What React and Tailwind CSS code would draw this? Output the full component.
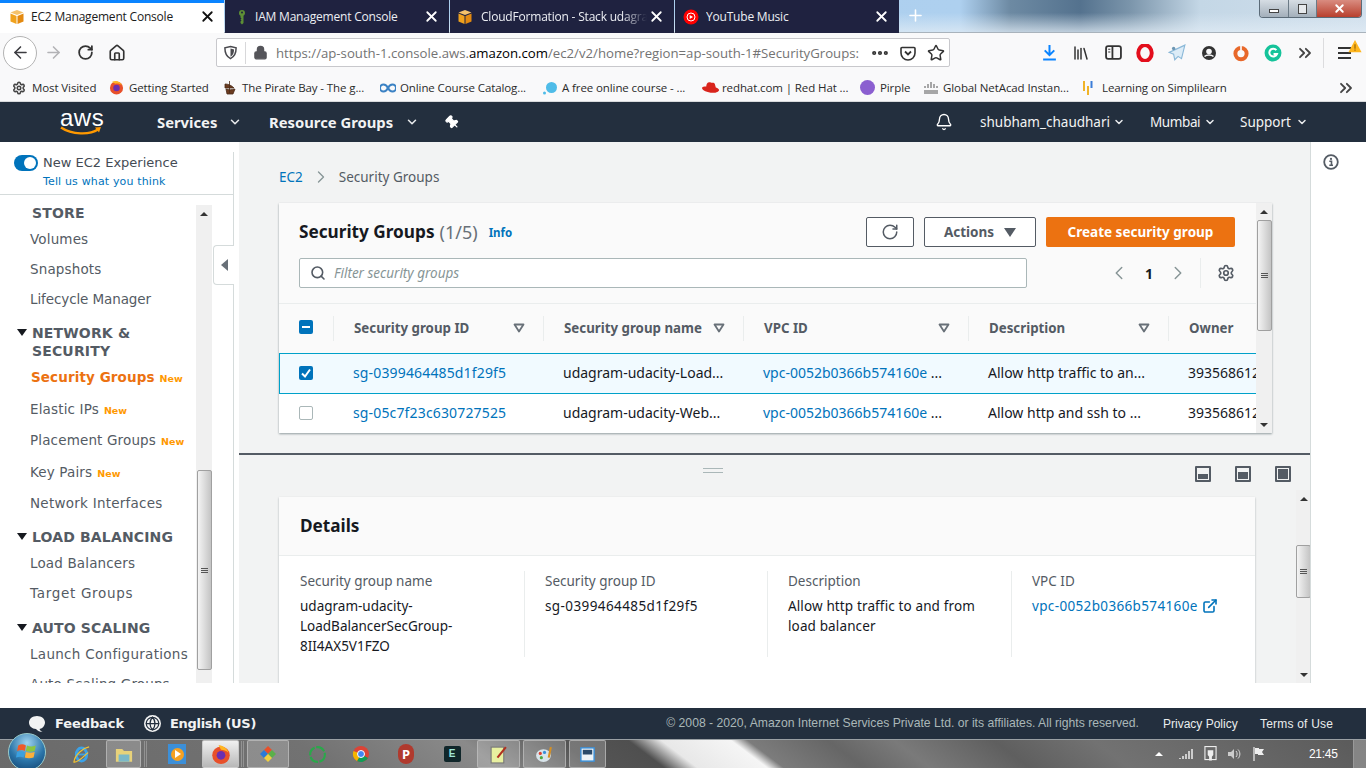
import React from "react";
import { ChevronDown, Bell, Pin, RotateCw, Search, Settings, ChevronLeft, ChevronRight, Library, Star, Home, ArrowLeft, ArrowRight, Lock, MoreHorizontal, X, Plus, ChevronsRight, Globe, ExternalLink } from "lucide-react";

const ui = "font-['Noto_Sans',sans-serif]";
const tabFont = "font-['Open_Sans','Noto_Sans',sans-serif]";

function Cube({ className = "" }) {
  return (
    <svg viewBox="0 0 16 16" className={`w-4 h-4 shrink-0 ${className}`}>
      <path d="M8 1 14.500 3.500 8 6 1.500 3.500Z" fill="#f5c26b" />
      <path d="M1.500 4.500 7.500 7V15L1.500 12.500Z" fill="#f0a21e" />
      <path d="M14.500 4.500 8.500 7V15L14.500 12.500Z" fill="#e48a10" />
    </svg>
  );
}
function KeyIcon() {
  return (
    <svg viewBox="0 0 16 16" className="w-4 h-4 shrink-0">
      <path d="M8 1c2 0 3 1.200 3 3 0 1.400-.8 2.300-1.500 2.700V14L8 15.500 6.500 14v-1.500L7.500 11.500 6.500 10.500 7.500 9.500 6.500 8.500V6.700C5.500 6.200 5 5.300 5 4c0-1.800 1-3 3-3Z" fill="#5d8f35" />
      <circle cx="8" cy="3.500" r="1" fill="#1f2340" />
    </svg>
  );
}
function YtIcon() {
  return (
    <svg viewBox="0 0 16 16" className="w-4 h-4 shrink-0">
      <circle cx="8" cy="8" r="7.500" fill="#f00" />
      <circle cx="8" cy="8" r="4" fill="none" stroke="#fff" strokeWidth="1" />
      <path d="M6.700 6v4L10 8Z" fill="#fff" />
    </svg>
  );
}

function Tab({ icon, label, xClass, textClass = "left-[31px]", fade }) {
  return (
    <div className="w-[224px] h-[33px] mr-px bg-[#1f2240] flex items-center relative shrink-0">
      <div className={`absolute top-[9px] ${xClass}`}>{icon}</div>
      <span className={`absolute top-[8px] ${textClass} text-[12px] leading-[18px] tracking-[-0.2px] text-[#eceef3] whitespace-nowrap overflow-hidden ${fade ? "w-[166px] [mask-image:linear-gradient(to_right,#000_85%,transparent)]" : ""} ${tabFont}`}>{label}</span>
      <X className="absolute left-[198px] top-[8px] w-[17px] h-[17px] text-white" strokeWidth={2.5} />
    </div>
  );
}

function TabStrip() {
  return (
    <div className="h-[33px] flex shrink-0 relative border-b border-[#a9b3bc] bg-[linear-gradient(to_bottom,rgba(255,255,255,0)_40%,rgba(225,236,245,0.75)_100%),linear-gradient(to_right,#a8cdee_0px,#aed0ef_960px,#6d8aa3_1010px,#54728e_1080px,#7b95ab_1130px,#c4d7e6_1200px,#d0dfec_1366px)]">
      <div className="w-[224px] h-[33px] mr-px bg-white border-t-[3px] border-[#0a84ff] relative shrink-0">
        <Cube className="absolute left-[9px] top-[6px]" />
        <span className={`absolute top-[5px] left-[31px] text-[12px] leading-[18px] tracking-[-0.2px] text-[#1b1b1b] whitespace-nowrap ${tabFont}`}>EC2 Management Console</span>
        <X className="absolute left-[199px] top-[5px] w-[17px] h-[17px] text-[#111]" strokeWidth={2.5} />
      </div>
      <Tab icon={<KeyIcon />} label="IAM Management Console" xClass="left-[9px]" textClass="left-[30px]" />
      <Tab icon={<Cube />} label="CloudFormation - Stack udagram" xClass="left-[7px]" fade />
      <Tab icon={<YtIcon />} label="YouTube Music" xClass="left-[8px]" />
      <Plus className="w-[19px] h-[19px] text-white ml-[6px] mt-[6px]" strokeWidth={2} />
      <div className="absolute right-[4px] top-0 w-[103px] h-[18px] flex rounded-b-[4px] border border-t-0 border-[#5b6b78] overflow-hidden">
        <div className="w-[29px] bg-[linear-gradient(to_bottom,#d6dde4,#a3afba)] flex items-center justify-center border-r border-[#6b7a86]">
          <div className="w-[10px] h-[4px] border border-[#444] bg-white mt-[4px]" />
        </div>
        <div className="w-[28px] bg-[linear-gradient(to_bottom,#d6dde4,#a3afba)] flex items-center justify-center border-r border-[#6b7a86]">
          <div className="w-[9px] h-[10px] border border-[#444] bg-[#e6e9ec]" />
        </div>
        <div className="flex-1 bg-[linear-gradient(to_bottom,#d98c80,#b83f2d)] flex items-center justify-center">
          <X className="w-[13px] h-[13px] text-white" strokeWidth={3.5} />
        </div>
      </div>
    </div>
  );
}

function TB({ children, className = "" }) {
  return <div className={`w-[32px] h-[32px] flex items-center justify-center shrink-0 ${className}`}>{children}</div>;
}

function Toolbar() {
  return (
    <div className="h-[39px] bg-[#f9f9fa] flex items-center shrink-0 relative">
      <div className="w-[34px] h-[34px] ml-[3px] rounded-full border border-[#b3b3b3] bg-white flex items-center justify-center shrink-0">
        <ArrowLeft className="w-[19px] h-[19px] text-[#3c3c40]" strokeWidth={2} />
      </div>
      <TB className="ml-0"><ArrowRight className="w-[19px] h-[19px] text-[#b3b3b6]" strokeWidth={2} /></TB>
      <TB><RotateCw className="w-[17px] h-[17px] text-[#333]" strokeWidth={2.5} /></TB>
      <TB><Home className="w-[18px] h-[18px] text-[#333]" strokeWidth={2.2} /></TB>
      <div className="ml-[83px] w-[734px] h-[29px] bg-white border border-[#c8c8cc] rounded-[2px] flex items-center relative shrink-0">
        <svg viewBox="0 0 16 16" className="w-[15px] h-[15px] ml-[6px] shrink-0 text-[#4a4a4f]"><path d="M8 1.500 14 3c0 6-1.500 9.500-6 11.500C3.500 12.500 2 9 2 3Z" fill="none" stroke="currentColor" strokeWidth="1.600" /><path d="M8 3.800 11.800 4.700C11.700 8.500 10.700 11 8 12.500Z" fill="currentColor" /></svg>
        <div className="w-px h-[22px] bg-[#d8d8da] ml-[7px]" />
        <Lock className="w-[15px] h-[15px] ml-[7px] text-[#55555a] shrink-0" fill="#55555a" strokeWidth={2} />
        <span className={`ml-[8px] text-[13.200px] leading-[18px] text-[#737373] whitespace-nowrap ${tabFont}`}>https://ap-south-1.console.aws.<span className="text-black">amazon.com</span>/ec2/v2/home?region=ap-south-1#SecurityGroups:</span>
        <MoreHorizontal className="absolute left-[653px] top-[4px] w-[20px] h-[20px] text-[#333]" strokeWidth={3} />
        <svg viewBox="0 0 16 16" className="absolute left-[683px] top-[6px] w-[16px] h-[16px] text-[#333]"><path d="M2 2.500h12a1 1 0 0 1 1 1V8A7 7 0 0 1 1 8V3.500a1 1 0 0 1 1-1Z" fill="none" stroke="currentColor" strokeWidth="1.600" /><path d="M5 6.500 8 9.500 11 6.500" fill="none" stroke="currentColor" strokeWidth="1.800" /></svg>
        <Star className="absolute left-[710px] top-[5px] w-[18px] h-[18px] text-[#333]" strokeWidth={2} />
      </div>
      <div className="ml-[83px] flex items-center">
        <TB><svg viewBox="0 0 16 16" className="w-[17px] h-[17px]"><path d="M8 1v9M3.500 6 8 10.500 12.500 6M2 14.500h12" fill="none" stroke="#0a84ff" strokeWidth="1.900" /></svg></TB>
        <TB><Library className="w-[18px] h-[18px] text-[#333]" strokeWidth={2} /></TB>
        <TB><svg viewBox="0 0 16 16" className="w-[17px] h-[17px] text-[#333]"><rect x="1" y="2" width="14" height="12" rx="2" fill="none" stroke="currentColor" strokeWidth="1.700" /><path d="M7 2v12" stroke="currentColor" strokeWidth="1.700" /><path d="M3 5h2M3 7.500h2" stroke="currentColor" /></svg></TB>
        <TB><svg viewBox="0 0 16 16" className="w-[18px] h-[18px]"><ellipse cx="8" cy="8" rx="6" ry="7" fill="none" stroke="#e30e1c" strokeWidth="3.500" /></svg></TB>
        <TB><svg viewBox="0 0 16 16" className="w-[18px] h-[18px]"><path d="M15 1 1 7.500 5 9l1 5 3-3 3 2Z" fill="#dcecf7" stroke="#8ab8d8" strokeWidth="1" /><circle cx="5" cy="4" r="1.500" fill="#6d96b3" /></svg></TB>
        <TB><svg viewBox="0 0 16 16" className="w-[16px] h-[16px]"><circle cx="8" cy="8" r="7" fill="#333" /><circle cx="8" cy="6.500" r="2.800" fill="#f9f9fa" /><path d="M3.500 11.500c2-2 7-2 9 0" stroke="#f9f9fa" fill="none" strokeWidth="1.500" /></svg></TB>
        <TB><svg viewBox="0 0 16 16" className="w-[18px] h-[18px]"><circle cx="8" cy="8.500" r="5" fill="none" stroke="#e8682a" strokeWidth="3.500" /><path d="M8 1v5" stroke="#f9f9fa" strokeWidth="1.500" /></svg></TB>
        <TB><svg viewBox="0 0 16 16" className="w-[18px] h-[18px]"><circle cx="8" cy="8" r="7.500" fill="#15c39a" /><path d="M11 5.500A3.500 3.500 0 1 0 11.500 9H8.500" fill="none" stroke="#fff" strokeWidth="1.800" /></svg></TB>
        <TB><ChevronsRight className="w-[20px] h-[20px] text-[#444]" strokeWidth={2.2} /></TB>
      </div>
      <div className="w-px h-[30px] bg-[#dcdcde] ml-[2px]" />
      <div className="ml-[14px] w-[13px] flex flex-col gap-[3px] relative">
        <div className="h-[2px] bg-[#333]" /><div className="h-[2px] bg-[#333]" /><div className="h-[2px] bg-[#333]" />
      </div>
      <svg viewBox="0 0 16 16" className="absolute left-[1348px] top-[6px] w-[14px] h-[14px]"><path d="M8 1 15.500 15H.5Z" fill="#ffb61e" /><path d="M8 6v5M8 12v1.500" stroke="#8a5a00" strokeWidth="1.200" /></svg>
    </div>
  );
}

const bookmarks = [
  { w: "w-[97px]", label: "Most Visited", icon: <Settings className="w-[14px] h-[14px] text-[#444]" strokeWidth={2.6} /> },
  { w: "w-[113px]", label: "Getting Started", icon: <svg viewBox="0 0 16 16" className="w-[15px] h-[15px]"><circle cx="8" cy="8.500" r="7" fill="#e8502a" /><circle cx="8" cy="8.500" r="3.500" fill="#6a2fb0" /><path d="M3 2c4-2 9-1 11 4-3-3-6-2-7-2Z" fill="#ffb521" /></svg> },
  { w: "w-[158px]", label: "The Pirate Bay - The g...", icon: <svg viewBox="0 0 16 16" className="w-[16px] h-[16px]"><path d="M7.500 1v12M3 4c3 0 6 1 9 4-3 0-6 0-9 0ZM4 9c3 1 6 1 9 0l-2 5H5Z" fill="#6b3b20" stroke="#4a2b18" strokeWidth=".8" /></svg> },
  { w: "w-[162px]", label: "Online Course Catalog...", icon: <svg viewBox="0 0 16 10" className="w-[16px] h-[10px]"><path d="M8 5C6.500 2 4.500 1.500 3.500 1.500A3.500 3.500 0 0 0 3.500 8.500C4.500 8.500 6.500 8 8 5c1.500-3 3.500-3.500 4.500-3.500a3.500 3.500 0 0 1 0 7C11.500 8.500 9.500 8 8 5Z" fill="none" stroke="#3b82c4" strokeWidth="2" /></svg> },
  { w: "w-[160px]", label: "A free online course - ...", icon: <svg viewBox="0 0 16 16" className="w-[16px] h-[16px]"><circle cx="9.500" cy="7.500" r="5.500" fill="#4fbce8" /><circle cx="2.500" cy="13" r="1.500" fill="#4fbce8" /></svg> },
  { w: "w-[158px]", label: "redhat.com | Red Hat ...", icon: <svg viewBox="0 0 16 12" className="w-[17px] h-[13px]"><path d="M4 5c0-2 1-4 3-4 1 0 1.500.5 2.500.5S11 1 12 2.500L13 6c2 .5 3 1.500 3 2.500S14 11 10 11C5 11 0 8.500 0 6.500 0 5 2 5 4 5Z" fill="#d9241c" /></svg> },
  { w: "w-[63px]", label: "Pirple", icon: <div className="w-[15px] h-[15px] rounded-full bg-[#8b5fd0]" /> },
  { w: "w-[159px]", label: "Global NetAcad Instan...", icon: <svg viewBox="0 0 16 12" className="w-[16px] h-[12px]"><path d="M2 4v2M5 2v4M8 0v6M11 2v4M14 4v2M1 9h14M1 11h14" stroke="#555" strokeWidth="1" /></svg> },
  { w: "w-[150px]", label: "Learning on Simplilearn", icon: <svg viewBox="0 0 12 16" className="w-[12px] h-[16px]"><path d="M2 1v10M6 6v9" stroke="#f0b429" strokeWidth="2" /><path d="M9.500 1v7" stroke="#3b7dd8" strokeWidth="2" /></svg> },
];

function Bookmarks() {
  return (
    <div className="h-[30px] bg-[#f9f9fa] border-b border-[#d8dadc] flex items-center pl-[12px] pt-[2px] shrink-0 relative">
      {bookmarks.map((b) => (
        <div key={b.label} className={`${b.w} flex items-center shrink-0`}>
          <div className="w-[18px] h-[16px] flex items-center shrink-0 mr-[2px]">{b.icon}</div>
          <span className={`text-[11.500px] leading-[16px] tracking-[-0.1px] text-[#2b2b2b] whitespace-nowrap ${tabFont}`}>{b.label}</span>
        </div>
      ))}
      <ChevronsRight className="absolute left-[1336px] top-[6px] w-[20px] h-[20px] text-[#444]" strokeWidth={2.2} />
    </div>
  );
}

function NavCaret() {
  return <ChevronDown className="w-[14px] h-[14px] text-[#e8eaec]" strokeWidth={2.6} />;
}

function AwsNav() {
  return (
    <div className="h-[40px] bg-[#232f3e] flex items-center shrink-0 text-white">
      <div className="w-[157px] flex justify-start pl-[60px] shrink-0">
        <div className="relative w-[42px] h-[30px]">
          <span className="absolute left-0 -top-[3px] text-[24px] leading-[28px] font-['Liberation_Sans',sans-serif] text-white tracking-[0.5px]">aws</span>
          <svg viewBox="0 0 42 10" className="absolute left-0 top-[19px] w-[42px] h-[10px]"><path d="M1 1.500C12 9 30 9 38 3.500" fill="none" stroke="#ff9900" strokeWidth="2.400" /><path d="M35 1.500 41 1 39 6.500Z" fill="#ff9900" /></svg>
        </div>
      </div>
      <span className={`text-[14.800px] font-bold leading-[20px] text-[#f2f3f3] w-[61px] whitespace-nowrap ${ui}`}>Services</span>
      <div className="ml-[10px] w-[41px]"><NavCaret /></div>
      <span className={`text-[14.800px] font-bold leading-[20px] text-[#f2f3f3] w-[125px] whitespace-nowrap ${ui}`}>Resource Groups</span>
      <div className="ml-[11px] w-[40px]"><NavCaret /></div>
      <Pin className="w-[15px] h-[15px] text-white -rotate-45" fill="#fff" strokeWidth={2} />
      <Bell className="w-[18px] h-[18px] text-white ml-[475px]" strokeWidth={1.8} />
      <span className={`ml-[27px] text-[13.500px] leading-[20px] text-[#f2f3f3] w-[130px] whitespace-nowrap ${ui}`}>shubham_chaudhari</span>
      <div className="w-[40px] pl-[3px]"><ChevronDown className="w-[12px] h-[12px] text-[#e8eaec]" strokeWidth={3} /></div>
      <span className={`text-[13.500px] leading-[20px] tracking-[-0.4px] text-[#f2f3f3] w-[48px] ${ui}`}>Mumbai</span>
      <div className="w-[42px] pl-[6px]"><ChevronDown className="w-[12px] h-[12px] text-[#e8eaec]" strokeWidth={3} /></div>
      <span className={`text-[13.500px] leading-[20px] text-[#f2f3f3] w-[55px] ${ui}`}>Support</span>
      <ChevronDown className="w-[12px] h-[12px] text-[#e8eaec] ml-[1px]" strokeWidth={3} />
    </div>
  );
}

function Scrollbar({ before, thumb, w = "w-[16px]", end = true, className = "" }) {
  return (
    <div className={`${w} shrink-0 bg-[#f0f0f0] flex flex-col items-center ${className}`}>
      <div className="h-[17px] w-full flex items-center justify-center shrink-0">
        <div className="w-0 h-0 border-x-[4px] border-x-transparent border-b-[4px] border-b-[#333]" />
      </div>
      <div className={`${before} shrink-0`} />
      <div className={`${thumb} w-[15px] shrink-0 rounded-[2px] border border-[#a0a0a0] bg-[linear-gradient(to_right,#f4f4f4,#dcdcdc_50%,#c4c4c4)] flex flex-col items-center justify-center gap-[1px]`}>
        <div className="w-[7px] h-px bg-[#555]" /><div className="w-[7px] h-px bg-[#555]" /><div className="w-[7px] h-px bg-[#555]" />
      </div>
      <div className="flex-1" />
      {end && (
        <div className="h-[17px] w-full flex items-center justify-center shrink-0">
          <div className="w-0 h-0 border-x-[4px] border-x-transparent border-t-[4px] border-t-[#333]" />
        </div>
      )}
    </div>
  );
}

const Caret = () => <div className="w-0 h-0 border-x-[5px] border-x-transparent border-t-[7px] border-t-[#16191f] absolute left-[17px] top-[5px]" />;

const side = "font-['DejaVu_Sans',sans-serif]";

function SItem({ m, t = "tracking-[0.15px]", children }) {
  return <div className={`${m} ${t} h-[20px] pl-[30px] text-[13.500px] leading-[20px] text-[#545b64] whitespace-nowrap ${side}`}>{children}</div>;
}
function SHead({ m, caret, children }) {
  return (
    <div className={`${m} relative pl-[32px] text-[14px] font-bold leading-[18px] tracking-[0.15px] text-[#545b64] ${side}`}>
      {caret && <Caret />}
      {children}
    </div>
  );
}
const New = () => <span className="ml-[5px] text-[9.500px] font-bold tracking-normal text-[#ff9900]">New</span>;

function Sidebar() {
  return (
    <div className="w-[239px] shrink-0 bg-white flex flex-col relative">
      <div className="absolute left-[233px] top-[10px] h-[43px] w-px bg-[#d5dbdb]" />
      <div className="h-[53px] pt-[13px] pl-[14px] mr-[5px] border-b border-[#d5dbdb] shrink-0">
        <div className="flex items-center h-[16px]">
          <div className="w-[24px] h-[16px] rounded-full bg-[#0073bb] flex items-center justify-end pr-[2px] shrink-0">
            <div className="w-[12px] h-[12px] rounded-full bg-white" />
          </div>
          <span className={`ml-[5px] text-[13px] leading-[16px] text-[#444b54] whitespace-nowrap ${side}`}>New EC2 Experience</span>
        </div>
        <div className={`mt-[3px] ml-[29px] text-[11px] leading-[15px] tracking-[0.15px] text-[#0073bb] ${side}`}>Tell us what you think</div>
      </div>
      <div className="flex flex-1 min-h-0 mr-[5px] border-r border-[#d5dbdb]">
        <div className="w-[196px] shrink-0 overflow-hidden pt-[9px]">
          <SHead m="" caret={false}>STORE</SHead>
          <SItem m="mt-[7px]">Volumes</SItem>
          <SItem m="mt-[10px]">Snapshots</SItem>
          <SItem m="mt-[10px]" t="tracking-[-0.1px]">Lifecycle Manager</SItem>
          <SHead m="mt-[15px]" caret>NETWORK &amp;<br />SECURITY</SHead>
          <div className={`mt-[7px] h-[20px] pl-[31px] text-[13.500px] leading-[20px] font-bold tracking-[0.1px] text-[#ec7211] whitespace-nowrap ${side}`}>Security Groups<New /></div>
          <SItem m="mt-[12px]">Elastic IPs<New /></SItem>
          <SItem m="mt-[11px]">Placement Groups<New /></SItem>
          <SItem m="mt-[12px]">Key Pairs<New /></SItem>
          <SItem m="mt-[11px]" t="tracking-[0.25px]">Network Interfaces</SItem>
          <SHead m="mt-[15px]" caret>LOAD BALANCING</SHead>
          <SItem m="mt-[7px]">Load Balancers</SItem>
          <SItem m="mt-[10px]" t="tracking-[0.7px]">Target Groups</SItem>
          <SHead m="mt-[16px]" caret>AUTO SCALING</SHead>
          <SItem m="mt-[7px]" t="tracking-[0.3px]">Launch Configurations</SItem>
          <SItem m="mt-[10px]">Auto Scaling Groups</SItem>
        </div>
        <Scrollbar className="mt-[10px]" before="h-[248px]" thumb="h-[200px]" end={false} />
      </div>
      <div className="absolute left-[213px] top-[103px] w-[21px] h-[40px] bg-white border border-r-0 border-[#d5dbdb] rounded-l-[4px] flex items-center justify-center">
        <div className="w-0 h-0 border-y-[6px] border-y-transparent border-r-[7px] border-r-[#687078]" />
      </div>
    </div>
  );
}

const Sort = () => (
  <svg viewBox="0 0 12 10" className="w-[12px] h-[10px] shrink-0"><path d="M1.500 1.500h9L6 8.500Z" fill="none" stroke="#687078" strokeWidth="1.800" strokeLinejoin="round" /></svg>
);

function HeadCell({ label, iconClass }) {
  return (
    <div className="relative h-full flex items-center pl-[21px] pb-[2px] overflow-hidden">
      <div className="absolute left-0 top-[12px] bottom-[12px] w-px bg-[#eaeded]" />
      <span className={`text-[13.300px] font-bold leading-[20px] text-[#545b64] whitespace-nowrap ${ui}`}>{label}</span>
      {iconClass && <div className={`absolute top-[19px] ${iconClass}`}><Sort /></div>}
    </div>
  );
}

const link = "text-[#0073bb]";
const cols = "grid grid-cols-[54px_210px_200px_225px_200px_88px]";

function Row({ selected, id, name, desc }) {
  const cell = `pl-[20px] text-[14px] leading-[20px] whitespace-nowrap overflow-hidden ${ui}`;
  return (
    <div className={`${cols} items-center ${selected ? "h-[41px] pb-[1px] bg-[#f1faff] border-y border-[#00a1c9] shadow-[inset_1px_0_0_#00a1c9]" : "h-[39px] pb-[2px] bg-white"}`}>
      <div className="pl-[20px]">
        {selected ? (
          <div className="w-[14px] h-[14px] rounded-[2px] bg-[#0073bb] flex items-center justify-center">
            <svg viewBox="0 0 14 14" className="w-[14px] h-[14px]"><path d="M3 7.500 6 10.500 11 3.500" fill="none" stroke="#fff" strokeWidth="2" /></svg>
          </div>
        ) : (
          <div className="w-[14px] h-[14px] rounded-[2px] border border-[#aab7b8] bg-white" />
        )}
      </div>
      <div className={`${cell} ${link} tracking-[0.15px]`}>{id}</div>
      <div className={`${cell} text-[#16191f]`}>{name}</div>
      <div className={`${cell} ${link}`}>vpc-0052b0366b574160e <span className="text-[#16191f]">...</span></div>
      <div className={`${cell} text-[#16191f]`}>{desc}</div>
      <div className={`${cell} text-[#16191f]`}>393568612345</div>
    </div>
  );
}

function TableCard() {
  return (
    <div className="w-[993px] h-[230px] flex bg-white shadow-[0_1px_2px_rgba(0,28,36,0.4)] shrink-0">
      <div className="w-[977px] shrink-0 flex flex-col">
        <div className="h-[101px] bg-[#fafafa] border-b border-[#eaeded] pl-[20px] pt-[14px] shrink-0">
          <div className="flex items-center h-[30px]">
            <span className={`text-[17.200px] font-bold leading-[24px] text-[#16191f] whitespace-nowrap ${ui}`}>Security Groups</span>
            <span className={`ml-[5px] text-[18px] leading-[24px] text-[#687078] ${ui}`}>(1/5)</span>
            <span className={`ml-[11px] text-[11.500px] font-bold leading-[16px] mt-[2px] ${link} ${ui}`}>Info</span>
            <div className="flex-1" />
            <div className="w-[48px] h-[30px] border border-[#545b64] rounded-[2px] bg-white flex items-center justify-center">
              <RotateCw className="w-[18px] h-[18px] text-[#545b64]" strokeWidth={2} />
            </div>
            <div className="ml-[10px] w-[112px] h-[30px] border border-[#545b64] rounded-[2px] bg-white flex items-center justify-center gap-[10px]">
              <span className={`text-[13.500px] font-bold text-[#545b64] ${ui}`}>Actions</span>
              <div className="w-0 h-0 border-x-[6px] border-x-transparent border-t-[9px] border-t-[#545b64]" />
            </div>
            <div className={`ml-[10px] mr-[21px] w-[189px] h-[30px] rounded-[2px] bg-[#ec7211] flex items-center justify-center text-[13.500px] font-bold text-white ${ui}`}>Create security group</div>
          </div>
          <div className="flex items-center h-[30px] mt-[11px]">
            <div className="w-[728px] h-[30px] border border-[#aab7b8] rounded-[2px] bg-white flex items-center pl-[10px]">
              <Search className="w-[16px] h-[16px] text-[#545b64]" strokeWidth={2.4} />
              <span className={`ml-[8px] text-[13.500px] italic text-[#879596] ${ui}`}>Filter security groups</span>
            </div>
            <ChevronLeft className="w-[22px] h-[22px] ml-[81px] text-[#879596]" strokeWidth={1.6} />
            <span className={`ml-[15px] w-[9px] text-[14px] font-bold text-[#16191f] ${ui}`}>1</span>
            <ChevronRight className="w-[22px] h-[22px] ml-[13px] text-[#879596]" strokeWidth={1.6} />
            <div className="w-px h-[30px] bg-[#eaeded] ml-[11px]" />
            <Settings className="w-[18px] h-[18px] ml-[16px] text-[#545b64]" strokeWidth={2.2} />
          </div>
        </div>
        <div className={`${cols} h-[49px] bg-[#fafafa] shrink-0`}>
          <div className="pl-[20px] pt-[16px]">
            <div className="w-[14px] h-[14px] rounded-[2px] bg-[#0073bb] flex items-center justify-center"><div className="w-[8px] h-[2px] bg-white" /></div>
          </div>
          <HeadCell label="Security group ID" iconClass="left-[180px]" />
          <HeadCell label="Security group name" iconClass="left-[170px]" />
          <HeadCell label="VPC ID" iconClass="left-[195px]" />
          <HeadCell label="Description" iconClass="left-[170px]" />
          <HeadCell label="Owner" />
        </div>
        <Row selected id="sg-0399464485d1f29f5" name="udagram-udacity-Load..." desc="Allow http traffic to an..." />
        <Row id="sg-05c7f23c630727525" name="udagram-udacity-Web..." desc="Allow http and ssh to ..." />
      </div>
      <Scrollbar before="h-0" thumb="h-[111px]" />
    </div>
  );
}

function SizeIcon({ fill }) {
  return (
    <div className="w-[16px] h-[16px] border-2 border-[#545b64] rounded-[1px] bg-[#f2f3f3] p-[1px] flex flex-col justify-end">
      <div className={`bg-[#545b64] ${fill}`} />
    </div>
  );
}

function DetailCol({ label, children, className }) {
  return (
    <div className={`h-[86px] ${className}`}>
      <div className={`text-[13.500px] leading-[20px] text-[#545b64] ${ui}`}>{label}</div>
      <div className={`mt-[5px] text-[13.500px] leading-[20px] text-[#16191f] ${ui}`}>{children}</div>
    </div>
  );
}

function Details() {
  return (
    <div className="flex-1 min-h-0 flex overflow-hidden">
      <div className="w-[1057px] shrink-0 pl-[40px] pt-[7px] overflow-hidden">
        <div className="w-[976px] h-[300px] bg-white shadow-[0_1px_2px_rgba(0,28,36,0.3)]">
          <div className="h-[59px] bg-[#fafafa] border-b border-[#eaeded] flex items-center pl-[21px]">
            <span className={`text-[17.200px] font-bold leading-[24px] text-[#16191f] ${ui}`}>Details</span>
          </div>
          <div className="grid grid-cols-[225px_243px_244px_1fr] pt-[15px] pl-[21px]">
            <DetailCol label="Security group name" className="border-r border-[#eaeded]">udagram-udacity-<br />LoadBalancerSecGroup-<br />8II4AX5V1FZO</DetailCol>
            <DetailCol label="Security group ID" className="pl-[20px] border-r border-[#eaeded]"><span className="tracking-[0.4px]">sg-0399464485d1f29f5</span></DetailCol>
            <DetailCol label="Description" className="pl-[20px] border-r border-[#eaeded]"><span className="tracking-[0.13px]">Allow http traffic to and from<br />load balancer</span></DetailCol>
            <DetailCol label="VPC ID" className="pl-[20px]">
              <span className={`inline-flex items-center gap-[4px] tracking-[0.35px] ${link}`}>vpc-0052b0366b574160e<ExternalLink className="w-[16px] h-[16px]" strokeWidth={2.4} /></span>
            </DetailCol>
          </div>
        </div>
      </div>
      <div className="flex-1" />
      <Scrollbar w="w-[15px]" before="h-[38px]" thumb="h-[53px]" />
    </div>
  );
}

function Center() {
  return (
    <div className="w-[1072px] shrink-0 bg-[#f2f3f3] flex flex-col border-r border-[#d5dbdb]">
      <div className="h-[313px] shrink-0 border-b-2 border-[#545b64] pl-[40px] pt-[25px]">
        <div className={`flex items-center h-[20px] text-[13.500px] leading-[20px] ${ui}`}>
          <span className={link}>EC2</span>
          <ChevronRight className="w-[20px] h-[20px] text-[#879596] ml-[8px]" strokeWidth={1.6} />
          <span className="ml-[8px] text-[#545b64]">Security Groups</span>
        </div>
        <div className="mt-[16px]"><TableCard /></div>
      </div>
      <div className="h-[35px] shrink-0 flex items-center relative">
        <div className="absolute left-[464px] top-[13px] w-[20px] h-[5px] border-y border-[#aab7b8]" />
        <div className="ml-[956px] flex gap-[24px] mt-[3px]">
          <SizeIcon fill="h-[5px]" />
          <SizeIcon fill="h-[7px]" />
          <SizeIcon fill="h-[10px]" />
        </div>
      </div>
      <Details />
    </div>
  );
}

function Footer() {
  return (
    <div className="h-[31px] bg-[#232f3e] flex items-center shrink-0 text-white">
      <svg viewBox="0 0 18 18" className="w-[18px] h-[18px] ml-[28px] shrink-0"><path d="M9 1c4.500 0 8 2.800 8 6.500S13.500 14 11.500 14c.5 1.500 2 2.500 3 3-2.500 0-5-1-6.500-3C4 13.800 1 11.200 1 7.500S4.500 1 9 1Z" fill="#f2f3f3" /></svg>
      <span className={`ml-[9px] text-[13px] font-bold w-[89px] whitespace-nowrap tracking-[-0.1px] text-[#f2f3f3] ${side}`}>Feedback</span>
      <div className="w-[17px] h-[17px] rounded-full bg-[#f2f3f3] flex items-center justify-center shrink-0"><Globe className="w-[15px] h-[15px] text-[#232f3e]" strokeWidth={2} /></div>
      <span className={`ml-[9px] text-[13px] font-bold whitespace-nowrap tracking-[-0.3px] text-[#f2f3f3] ${side}`}>English (US)</span>
      <div className="flex-1" />
      <span className="text-[12.200px] text-[#aab7b8] whitespace-nowrap font-['Liberation_Sans',sans-serif]">© 2008 - 2020, Amazon Internet Services Private Ltd. or its affiliates. All rights reserved.</span>
      <span className="ml-[24px] w-[73px] text-[12px] text-[#eaeded] whitespace-nowrap font-['Liberation_Sans',sans-serif]">Privacy Policy</span>
      <span className="ml-[24px] mr-[32px] w-[74px] text-[12px] tracking-[0.2px] text-[#eaeded] whitespace-nowrap font-['Liberation_Sans',sans-serif]">Terms of Use</span>
    </div>
  );
}

const TaskBtn = ({ children, w, light, m = "" }) => (
  <div className={`${w} ${m} h-[28px] shrink-0 rounded-[2px] border border-[#c0c0c0]/70 flex items-center justify-center ${light ? "bg-[linear-gradient(to_bottom,#f0f0f0,#b8b8b8)]" : "bg-white/20"}`}>{children}</div>
);
const TaskIcon = ({ children, w, m = "" }) => <div className={`${w} ${m} h-[28px] shrink-0 flex items-center justify-center`}>{children}</div>;

function Taskbar() {
  return (
    <div className="h-[29px] shrink-0 flex items-center relative border-t border-[#9aa0a4] bg-[linear-gradient(37deg,#6a6a6a_0px,#727272_200px,#8a8a8a_300px,#555555_360px,#4f4f4f_400px,#e8e8e8_420px,#f5f5f5_462px,#7c7c7c_472px,#666666_520px,#7a7a7a_560px,#5f5f5f_620px,#727272_680px,#5a5a5a_845px)]">
      <div className="absolute left-[8px] -top-[7px] w-[38px] h-[38px] rounded-full border border-[#9cc] bg-[radial-gradient(circle_at_50%_25%,#9fd4ef,#2a74a8_55%,#0f3d6a)] flex items-center justify-center">
        <svg viewBox="0 0 20 20" className="w-[22px] h-[22px]"><path d="M2 4c3-1.500 5-1 7 0l-1 5C6 8 4 8 1 9Z" fill="#f05a28" /><path d="M10 4c2 1 4.500 1.500 8 0l-1 5c-3 1-5 1-8 0Z" fill="#8cc63f" /><path d="M1 10c3-1 5-1 7 0l-1 5c-2-1-4-1-7 0Z" fill="#3aa0e0" /><path d="M9 10c3 1 5 1 8 0l-1 5c-3 1-5.500 1-8 0Z" fill="#fbb03b" /></svg>
      </div>
      <TaskIcon w="w-[24px]" m="ml-[69px]">
        <svg viewBox="0 0 20 20" className="w-[19px] h-[21px]"><ellipse cx="10" cy="10" rx="5.500" ry="7" fill="none" stroke="#3ba2e8" strokeWidth="3" /><path d="M6 10h9" stroke="#3ba2e8" strokeWidth="2" /><path d="M18 2C12 3 3 10 2 18c4 1 10-6 15-10" fill="none" stroke="#f4c430" strokeWidth="1.200" /></svg>
      </TaskIcon>
      <TaskBtn w="w-[35px]" m="ml-[13px]">
        <svg viewBox="0 0 20 18" className="w-[18px] h-[17px]"><path d="M1 3h7l2 2h9v12H1Z" fill="#e8d27a" /><rect x="4" y="9" width="12" height="8" fill="#7bb8c8" /></svg>
      </TaskBtn>
      <div className="w-[3px] h-[26px] ml-[3px] border-x border-[#aaa]/60" />
      <TaskIcon w="w-[24px]" m="ml-[18px]">
        <div className="w-[18px] h-[20px] bg-[#3c8fd8] flex items-center justify-center"><div className="w-[13px] h-[13px] rounded-full bg-[#f5a022] flex items-center justify-center"><div className="w-0 h-0 border-y-[4px] border-y-transparent border-l-[6px] border-l-white ml-[1px]" /></div></div>
      </TaskIcon>
      <TaskBtn w="w-[37px]" light m="ml-[13px]">
        <svg viewBox="0 0 16 16" className="w-[20px] h-[20px]"><circle cx="8" cy="9" r="7" fill="#e8502a" /><circle cx="8" cy="9" r="3.500" fill="#6a2fb0" /><path d="M6 1c3 0 7 2 8 6-2-2-4-2.500-6-2.500Z" fill="#ffb521" /></svg>
      </TaskBtn>
      <div className="w-[3px] h-[26px] ml-[2px] border-x border-[#aaa]/60" />
      <TaskBtn w="w-[42px]" m="ml-[3px]">
        <svg viewBox="0 0 18 18" className="w-[18px] h-[18px]"><path d="M9 1 13 5 9 9 5 5Z" fill="#e8502a" /><path d="M1 9 5 5 9 9 5 13Z" fill="#2a7ad8" /><path d="M17 9 13 5 9 9 13 13Z" fill="#5ab04a" /><path d="M9 17 13 13 9 9 5 13Z" fill="#f0d040" /></svg>
      </TaskBtn>
      <TaskIcon w="w-[24px]" m="ml-[16px]">
        <svg viewBox="0 0 18 18" className="w-[19px] h-[19px]"><circle cx="9" cy="9" r="7" fill="none" stroke="#2aa84a" strokeWidth="2" strokeDasharray="9 1.500" /></svg>
      </TaskIcon>
      <TaskIcon w="w-[24px]" m="ml-[20px]">
        <svg viewBox="0 0 18 18" className="w-[18px] h-[18px]"><circle cx="9" cy="9" r="8" fill="#db4437" /><path d="M9 9 16 13A8 8 0 0 1 5 16Z" fill="#0f9d58" /><path d="M9 9 5 16A8 8 0 0 1 1.500 6Z" fill="#f4b400" /><circle cx="9" cy="9" r="3.500" fill="#4285f4" stroke="#fff" /></svg>
      </TaskIcon>
      <TaskIcon w="w-[24px]" m="ml-[21px]">
        <div className={`w-[16px] h-[20px] rounded-full bg-[#b03a2e] flex items-center justify-center text-[13px] font-bold leading-none text-white ${ui}`}>P</div>
      </TaskIcon>
      <TaskIcon w="w-[24px]" m="ml-[22px]">
        <div className="w-[17px] h-[16px] rounded-[2px] bg-[#10262a] flex items-center justify-center text-[10px] font-bold leading-none text-[#9fe6d8] font-['Liberation_Sans',sans-serif]">E</div>
      </TaskIcon>
      <TaskBtn w="w-[43px]" m="ml-[13px]">
        <svg viewBox="0 0 18 18" className="w-[19px] h-[21px]"><rect x="2" y="2" width="12" height="15" fill="#e8f0a0" stroke="#777" /><path d="M16 2 8 12" stroke="#b03020" strokeWidth="2" /></svg>
      </TaskBtn>
      <TaskBtn w="w-[43px]" m="ml-[3px]">
        <svg viewBox="0 0 18 18" className="w-[19px] h-[19px]"><ellipse cx="8" cy="10" rx="7" ry="6" fill="#d8e4ea" /><circle cx="5" cy="8" r="1.500" fill="#e04030" /><circle cx="9" cy="7" r="1.500" fill="#3a8fd8" /><circle cx="6" cy="12" r="1.500" fill="#50a840" /><path d="M15 2 13 12" stroke="#d89020" strokeWidth="2" /></svg>
      </TaskBtn>
      <TaskBtn w="w-[37px]" m="ml-[3px]">
        <svg viewBox="0 0 18 18" className="w-[17px] h-[17px]"><rect x="2" y="2" width="14" height="14" fill="#eef4f8" stroke="#3a8fd8" strokeWidth="1.500" /><rect x="4" y="4" width="10" height="5" fill="#2a4a6a" /></svg>
      </TaskBtn>
      <div className="flex-1" />
      <div className="w-0 h-0 border-x-[4px] border-x-transparent border-b-[4px] border-b-white" />
      <svg viewBox="0 0 14 12" className="ml-[16px] w-[14px] h-[12px] shrink-0"><path d="M1 11v-1M4 11V8M7 11V6M10 11V3M13 11V1" stroke="#eee" strokeWidth="1.500" /></svg>
      <svg viewBox="0 0 14 18" className="ml-[11px] w-[13px] h-[18px] shrink-0"><rect x="1" y="1" width="12" height="14" fill="none" stroke="#eee" strokeWidth="1.200" /><path d="M4 5h6v5l-1.500 2v4h-3v-4L4 10Z" fill="#eee" /></svg>
      <svg viewBox="0 0 14 14" className="ml-[10px] w-[14px] h-[14px] shrink-0"><path d="M1 5h3l3-3v10L4 9H1Z" fill="#ccc" /><path d="M9 4c1.500 1.500 1.500 4.500 0 6M11 2.500c2.500 2.500 2.500 6.500 0 9" stroke="#ddd" fill="none" /></svg>
      <svg viewBox="0 0 14 16" className="ml-[11px] w-[14px] h-[16px] shrink-0"><path d="M2 1v14" stroke="#eee" strokeWidth="1.200" /><path d="M3 2h4v1h5l-2 3 2 3H6V8H3Z" fill="#eee" /></svg>
      <span className="ml-[43px] w-[41px] text-[12px] text-white whitespace-nowrap font-['Liberation_Sans',sans-serif] tracking-[-0.3px]">21:45</span>
      <div className="ml-[3px] mr-0 w-[13px] h-[28px] border-l border-[#999] bg-white/25" />
    </div>
  );
}

export default function App() {
  return (
    <div className="w-[1366px] h-[768px] overflow-hidden flex flex-col bg-white">
      <TabStrip />
      <Toolbar />
      <Bookmarks />
      <AwsNav />
      <div className="h-[541px] flex shrink-0 overflow-hidden">
        <Sidebar />
        <Center />
        <div className="flex-1 bg-white pl-[12px] pt-[12px]">
          <svg viewBox="0 0 16 16" className="w-[16px] h-[16px]"><circle cx="8" cy="8" r="6.800" fill="none" stroke="#545b64" strokeWidth="1.800" /><circle cx="8" cy="4.900" r="1.100" fill="#545b64" /><path d="M6.300 7.200H8.500V11M6.300 11.300H10" fill="none" stroke="#545b64" strokeWidth="1.600" /></svg>
        </div>
      </div>
      <div className="h-[25px] bg-white shrink-0" />
      <Footer />
      <Taskbar />
    </div>
  );
}
